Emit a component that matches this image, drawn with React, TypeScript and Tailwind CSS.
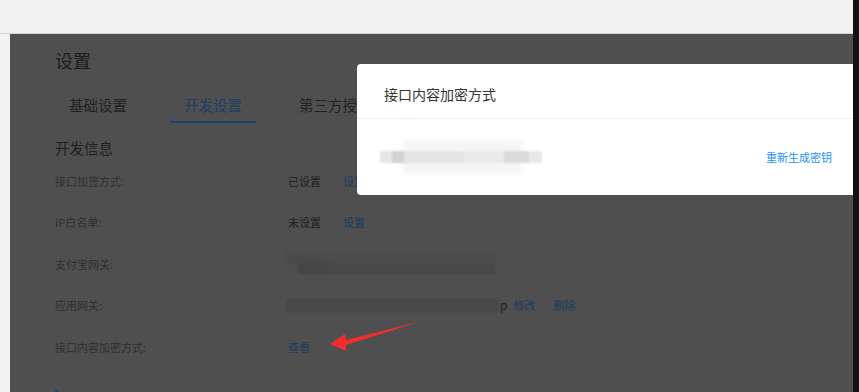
import React from 'react';

const rows = [
  { label: '接口加签方式:', kind: 'set' },
  { label: 'IP白名单:', kind: 'unset' },
  { label: '支付宝网关:', kind: 'blur' },
  { label: '应用网关:', kind: 'gateway' },
  { label: '接口内容加密方式:', kind: 'view' },
];

function Pixelated({ width }: { width: number }) {
  return (
    <div className="flex flex-col gap-0 blur-[1.5px]" style={{ width }}>
      <div className="h-[10px] w-full flex">
        <div className="w-[40px] bg-[#4a4a4a]" />
        <div className="flex-1 bg-[#4c4c4c]" />
      </div>
      <div className="h-[11px] w-full flex">
        <div className="w-[12px] bg-[#4d4d4d]" />
        <div className="w-[30px] bg-[#454545]" />
        <div className="flex-1 bg-[#484848]" />
      </div>
    </div>
  );
}

function App() {
  return (
    <div
      className="relative w-[859px] h-[392px] overflow-hidden flex bg-[#f2f2f2]"
      style={{ fontFamily: '"Noto Sans CJK SC", "Noto Sans", sans-serif' }}
    >
      <div className="flex-1 flex flex-col">
        <div className="h-[34px] shrink-0 border-b border-[#d4d4d4]" />
        <div className="flex-1 flex">
          <div className="w-[10px] shrink-0" />
          <div className="relative flex-1 bg-[#4f4f4f] pl-[45px] pt-[14px]">
            <h1 className="text-[18px] leading-[24px] text-[#1c1c1c]">设置</h1>

            <div className="mt-[23px] flex gap-[29px]">
              <div className="px-[14px] pb-[8px] text-[14.5px] leading-[20px] text-[#222]">基础设置</div>
              <div className="px-[14px] pb-[6px] text-[14.5px] leading-[20px] text-[#1b4163] border-b-2 border-[#184470]">开发设置</div>
              <div className="px-[14px] pb-[8px] text-[14.5px] leading-[20px] text-[#222]">第三方授权</div>
            </div>

            <h2 className="mt-[15px] text-[14.5px] leading-[20px] text-[#1f1f1f]">开发信息</h2>

            <div className="mt-[2px] flex flex-col">
              {rows.map((r) => (
                <div key={r.label} className="h-[41.5px] flex items-center text-[11px]">
                  <div className="w-[233px] text-[#303030]">{r.label}</div>
                  {r.kind === 'set' && (
                    <div className="flex gap-[22px]">
                      <span className="text-[#1e1e1e]">已设置</span>
                      <span className="text-[#1d3d5e]">设置</span>
                    </div>
                  )}
                  {r.kind === 'unset' && (
                    <div className="flex gap-[22px]">
                      <span className="text-[#1e1e1e]">未设置</span>
                      <span className="text-[#1d3d5e]">设置</span>
                    </div>
                  )}
                  {r.kind === 'blur' && (
                    <div className="-ml-[2px]">
                      <Pixelated width={209} />
                    </div>
                  )}
                  {r.kind === 'gateway' && (
                    <div className="-ml-[2px] flex items-center">
                      <div className="h-[13px] w-[213px] bg-[#484848] blur-[1.5px]" />
                      <span className="ml-[1px] text-[#1e1e1e] text-[12px]">p</span>
                      <span className="ml-[6px] text-[#1d3d5e]">修改</span>
                      <span className="ml-[18px] text-[#1d3d5e]">删除</span>
                    </div>
                  )}
                  {r.kind === 'view' && <span className="text-[#1d3d5e]">查看</span>}
                </div>
              ))}
            </div>

            <div className="mt-[22px] w-[3px] h-[6px] bg-[#1d4a78]" />

            <div className="absolute left-[347px] right-0 top-[30px] h-[131px] bg-white rounded-l-[4px] flex flex-col">
              <div className="h-[55px] shrink-0 pl-[27px] pt-[20px] border-b border-[#f0f0f0] text-[14px] leading-[20px] text-[#333]">
                接口内容加密方式
              </div>
              <div className="flex-1 flex items-center justify-between pl-[23px] pr-[21px]">
                <div className="relative w-[162px] h-[34px] flex items-center">
                  <div className="absolute left-[23px] right-[20px] top-0 bottom-0 bg-[#f5f5f5] blur-[2px]" />
                  <div className="relative w-full h-[12px] flex blur-[1px]">
                    <div className="w-[12px] bg-[#e6e6e6]" />
                    <div className="w-[12px] bg-[#d2d2d2]" />
                    <div className="w-[60px] bg-[#e4e4e4]" />
                    <div className="w-[40px] bg-[#eaeaea]" />
                    <div className="w-[25px] bg-[#dadada]" />
                    <div className="flex-1 bg-[#e8e8e8]" />
                  </div>
                </div>
                <span className="text-[11px] text-[#1a90ff]">重新生成密钥</span>
              </div>
            </div>
          </div>
        </div>
      </div>
      <div className="w-[6px] shrink-0 bg-[#111]" />

      <svg className="absolute left-0 top-0 pointer-events-none" width="859" height="392" viewBox="0 0 859 392">
        <polygon
          points="422,321 346,340 345,334 330,344 346,351 346,345"
          fill="#f32d2d"
        />
      </svg>
    </div>
  );
}

export default App;
